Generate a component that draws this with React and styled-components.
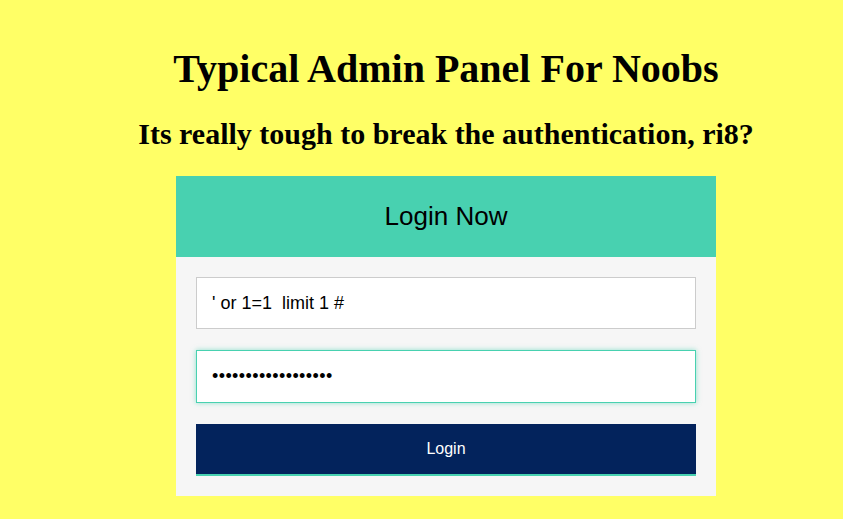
import React from "react";
import styled, { createGlobalStyle } from "styled-components";

const GlobalStyle = createGlobalStyle`
  html, body {
    margin: 0;
    padding: 0;
    background: #ffff66;
  }
  body {
    font-family: "Liberation Serif", "Times New Roman", serif;
  }
`;

const Page = styled.div`
  display: flex;
  flex-direction: column;
  align-items: center;
  padding: 45px 0 0 49px;
`;

const Title = styled.h1`
  margin: 0;
  font-size: 40px;
  font-weight: bold;
  line-height: 1.2;
`;

const Subtitle = styled.h2`
  margin: 23px 0 0;
  font-size: 30px;
  font-weight: bold;
  line-height: 1.2;
`;

const Panel = styled.div`
  width: 540px;
  margin-top: 24px;
  font-family: "Liberation Sans", Arial, sans-serif;
`;

const PanelHeader = styled.div`
  height: 81px;
  background: #48d1b0;
  display: flex;
  align-items: center;
  justify-content: center;
  font-size: 26px;
  color: #000;
`;

const PanelBody = styled.form`
  background: #f6f6f6;
  padding: 20px;
  display: flex;
  flex-direction: column;
  gap: 21px;
`;

const Field = styled.input`
  box-sizing: border-box;
  width: 100%;
  height: ${(p) => (p.$focused ? "53px" : "52px")};
  padding: 0 15px;
  font-size: 18px;
  font-family: "Liberation Sans", Arial, sans-serif;
  color: #000;
  background: #fff;
  border: 1px solid ${(p) => (p.$focused ? "#48d1b0" : "#cccccc")};
  box-shadow: ${(p) => (p.$focused ? "0 0 5px rgba(72, 209, 176, 0.6)" : "none")};
  outline: none;
  letter-spacing: ${(p) => (p.type === "password" ? "0.4px" : "normal")};
`;

const Button = styled.button`
  height: 52px;
  width: 100%;
  border: none;
  border-bottom: 2px solid #48d1b0;
  background: #03235c;
  color: #fff;
  font-size: 16px;
  font-family: "Liberation Sans", Arial, sans-serif;
  cursor: pointer;
`;

export default function App() {
  return (
    <>
      <GlobalStyle />
      <Page>
        <Title>Typical Admin Panel For Noobs</Title>
        <Subtitle>Its really tough to break the authentication, ri8?</Subtitle>
        <Panel>
          <PanelHeader>Login Now</PanelHeader>
          <PanelBody onSubmit={(e) => e.preventDefault()}>
            <Field type="text" defaultValue="' or 1=1  limit 1 #" />
            <Field type="password" defaultValue="111111111111111111" $focused />
            <Button type="submit">Login</Button>
          </PanelBody>
        </Panel>
      </Page>
    </>
  );
}
